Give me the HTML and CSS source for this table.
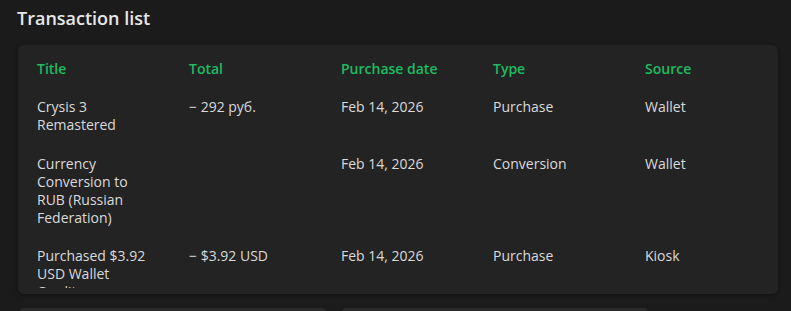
FILE: index.html
```html
<!DOCTYPE html>
<html lang="en">
<head>
<meta charset="utf-8">
<title>Transaction list</title>
<link rel="stylesheet" href="styles.css">
</head>
<body>
<main class="page">
  <h1 class="heading">Transaction list</h1>
  <section class="card">
    <div class="scroller">
      <table class="tx-table">
        <thead>
          <tr>
            <th>Title</th>
            <th>Total</th>
            <th>Purchase date</th>
            <th>Type</th>
            <th>Source</th>
          </tr>
        </thead>
        <tbody>
          <tr>
            <td>Crysis 3 Remastered</td>
            <td>&minus; 292 руб.</td>
            <td>Feb 14, 2026</td>
            <td>Purchase</td>
            <td>Wallet</td>
          </tr>
          <tr>
            <td>Currency Conversion to RUB (Russian Federation)</td>
            <td></td>
            <td>Feb 14, 2026</td>
            <td>Conversion</td>
            <td>Wallet</td>
          </tr>
          <tr>
            <td>Purchased $3.92 USD Wallet Credit</td>
            <td>&minus; $3.92 USD</td>
            <td>Feb 14, 2026</td>
            <td>Purchase</td>
            <td>Kiosk</td>
          </tr>
        </tbody>
      </table>
    </div>
  </section>
  <div class="more-cards">
    <div class="mini-card"></div>
    <div class="mini-card"></div>
  </div>
</main>
</body>
</html>
```
FILE: styles.css
```css
html, body {
  margin: 0;
  padding: 0;
  background: #1b1b1c;
  height: 100%;
  overflow: hidden;
}

body {
  font-family: "Open Sans", "Noto Sans", sans-serif;
  color: #d9dadb;
}

.page {
  padding: 6px 13px 0 18px;
}

.heading {
  margin: 0 0 15px -1px;
  font-size: 18px;
  line-height: 24px;
  font-weight: 600;
  color: #e6e7e8;
}

.card {
  background: #232323;
  border-radius: 6px;
  box-shadow: 0 1px 4px rgba(0, 0, 0, 0.35);
  padding-bottom: 6px;
}

.scroller {
  height: 243px;
  overflow: hidden;
}

.tx-table {
  width: 100%;
  border-collapse: collapse;
  table-layout: fixed;
}

.tx-table th,
.tx-table td {
  width: 20%;
  text-align: left;
  vertical-align: top;
  font-size: 14px;
  line-height: 18px;
  padding: 10px 19px 11px 19px;
}

.tx-table th {
  color: #1dbb62;
  font-weight: 600;
  padding-top: 15px;
  padding-bottom: 10px;
}

.tx-table td {
  color: #d9dadb;
  font-weight: 400;
}

.tx-table tbody tr:last-child td {
  padding-top: 9px;
}

.more-cards {
  display: flex;
  gap: 16px;
  margin-top: 14px;
  padding-left: 2px;
}

.mini-card {
  width: 306px;
  height: 40px;
  background: #2a2a2a;
  border-radius: 4px;
}
```
